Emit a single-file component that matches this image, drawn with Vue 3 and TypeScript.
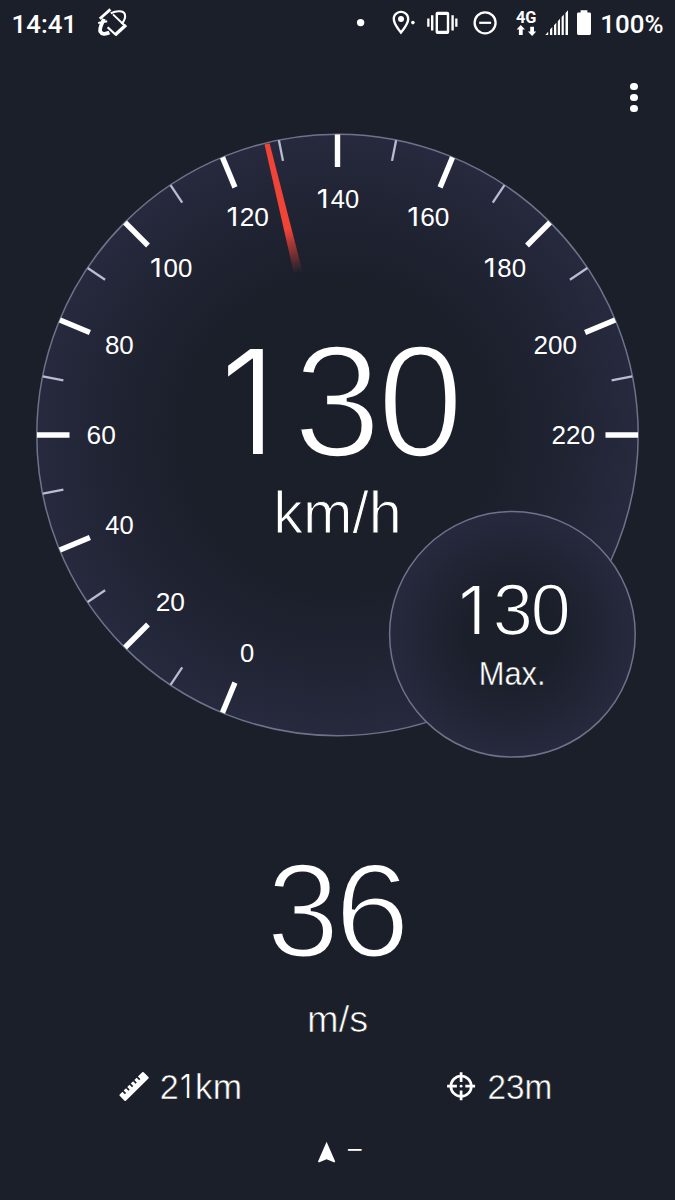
<script setup lang="ts">
interface Run {
  text: string
  left: number
  right: number
  baseline: number
  size: number
  family?: string
  weight?: number
  // Width of a background-coloured outline that slims the letters.
  thin?: number
}

type Label = Run[]

const SANS = 'Liberation Sans'
const ctx = document.createElement('canvas').getContext('2d')!

// Attributes of a run, stretched so that its ink spans left..right.
// Measured at a large size, where pixel rounding of the ink box is negligible.
function fit(r: Run) {
  const family = `"${r.family ?? SANS}", sans-serif`
  const thin = r.thin ?? 0
  ctx.font = `${r.weight ?? 400} 1000px ${family}`
  const m = ctx.measureText(r.text)
  const s = (r.right - r.left + thin) / (m.actualBoundingBoxLeft + m.actualBoundingBoxRight)
  return {
    x: (r.left - thin / 2 + m.actualBoundingBoxLeft * s).toFixed(2),
    y: r.baseline,
    textLength: (m.width * s).toFixed(2),
    lengthAdjust: 'spacingAndGlyphs',
    'font-family': family,
    'font-size': r.size,
    'font-weight': r.weight ?? 400,
    stroke: thin ? '#1b1f2a' : 'none',
    'stroke-width': thin,
  }
}

const clock: Label = [{ text: '14:41', left: 13.6, right: 72.4, baseline: 33, size: 26.3, weight: 500, family: 'Roboto' }]
const battery: Label = [{ text: '100%', left: 602.3, right: 662.7, baseline: 32.8, size: 26.3, weight: 500, family: 'Roboto' }]
const network: Label = [{ text: '4G', left: 516.2, right: 535.8, baseline: 22.8, size: 16.4, weight: 700, family: 'Roboto' }]

const CX = 337.5
const CY = 435
const point = (deg: number, r: number) => ({
  x: CX + r * Math.cos((deg * Math.PI) / 180),
  y: CY - r * Math.sin((deg * Math.PI) / 180),
})

const ticks = Array.from({ length: 23 }, (_, i) => {
  const deg = 247.5 - i * 11.25
  const major = i % 2 === 0
  return { major, a: point(deg, 300.5), b: point(deg, major ? 268 : 279.5) }
})

const scale: Label[] = Array.from({ length: 12 }, (_, i) => {
  const text = String(i * 20)
  const c = point(247.5 - i * 22.5, 236)
  const baseline = c.y + 9
  if (text[0] === '1') {
    const left = c.x + 0.9 - 20.2
    return [
      { text: '1', left, right: left + 8.2, baseline, size: 25.8, family: 'Inter' },
      { text: text.slice(1), left: left + 13, right: left + 40.3, baseline, size: 26.5 },
    ]
  }
  const width = [12.8, 27.4, 41.6][text.length - 1]
  return [{ text, left: c.x - width / 2, right: c.x + width / 2, baseline, size: 26.5 }]
})

const speed: Label[] = [
  [
    { text: '1', left: 227, right: 265, baseline: 454.4, size: 145, family: 'Inter', weight: 300 },
    { text: '3', left: 300, right: 373, baseline: 456.4, size: 160, thin: 3.6 },
    { text: '0', left: 384.2, right: 457.8, baseline: 456.4, size: 160, thin: 3.6 },
  ],
  [{ text: 'km/h', left: 277.5, right: 398, baseline: 533.2, size: 58.4, thin: 1.1 }],
]
const max: Label[] = [
  [
    { text: '1', left: 462, right: 480.3, baseline: 634.4, size: 66.4, family: 'Inter', weight: 300 },
    { text: '3', left: 495.9, right: 529.2, baseline: 635.3, size: 73, thin: 1.7 },
    { text: '0', left: 533.9, right: 568.1, baseline: 635.3, size: 73, thin: 1.7 },
  ],
  [{ text: 'Max.', left: 481.3, right: 542.6, baseline: 685.4, size: 33.4, thin: 0.4 }],
]
const metric: Label[] = [
  [
    { text: '3', left: 272.2, right: 332.6, baseline: 956.6, size: 133.8, thin: 3 },
    { text: '6', left: 342.7, right: 403, baseline: 956.6, size: 133.8, thin: 3 },
  ],
  [{ text: 'm/s', left: 309.8, right: 366.6, baseline: 1032.1, size: 37.8, thin: 0.7 }],
]
const distance: Label = [
  { text: '2', left: 161.5, right: 177, baseline: 1098.5, size: 34.6, thin: 0.5 },
  { text: '1', left: 181.5, right: 189.6, baseline: 1098.3, size: 32.6, family: 'Inter', weight: 300 },
  { text: 'km', left: 197.5, right: 239.9, baseline: 1098.5, size: 34.6, thin: 0.5 },
]
const accuracy: Label = [{ text: '23m', left: 489.2, right: 550.2, baseline: 1098.5, size: 34.6, thin: 0.5 }]
const heading: Label = [{ text: '–', left: 348, right: 361.5, baseline: 1159.4, size: 30, family: 'Inter', weight: 300 }]
</script>

<template>
  <main class="screen">
    <header class="status">
      <svg width="340" height="46" viewBox="0 0 340 46">
        <text><tspan v-for="(r, i) in clock" :key="i" v-bind="fit(r)">{{ r.text }}</tspan></text>
        <g class="line">
          <path d="M99.8 18.7 L110.4 9.4" stroke-width="2.8" />
          <path d="M110.8 13.2 C117 10.4 123.6 10.6 124.9 14.4 C125.6 17 124.2 20.8 121.6 24" stroke-width="2.1" />
          <path d="M113 14.4 L125.4 26.2" stroke-width="2" />
          <path d="M126 25 L115 35" stroke-width="3.4" />
          <path d="M116 35 L107.6 27.2" stroke-width="2.2" />
          <path d="M103.9 18.9 C102.3 23 98.9 28.4 100.4 31.6 C101.7 34.2 105.4 34.4 109.4 32.6" stroke-width="3.8" />
          <path d="M98.2 23 L107.2 21.2" stroke-width="2" />
        </g>
      </svg>
      <svg width="335" height="46" viewBox="340 0 335 46">
        <circle cx="360.6" cy="22.6" r="3.7" />
        <path
          fill-rule="evenodd"
          d="M401 10.8 C396.2 10.8 392.6 14.4 392.6 19 C392.6 25 401 34.4 401 34.4 C401 34.4 409.4 25 409.4 19 C409.4 14.4 405.8 10.8 401 10.8 Z M401 13.1 C404.4 13.1 407 15.7 407 19 C407 22.4 403.4 27.8 401 30.6 C398.6 27.8 395 22.4 395 19 C395 15.7 397.6 13.1 401 13.1 Z"
        />
        <circle cx="401" cy="19" r="3" />
        <circle cx="412.9" cy="22.6" r="1.8" />
        <path
          fill-rule="evenodd"
          d="M437.5 11.7 H447.3 Q449.2 11.7 449.2 13.6 V32.1 Q449.2 34 447.3 34 H437.5 Q435.6 34 435.6 32.1 V13.6 Q435.6 11.7 437.5 11.7 Z M438 15 V30.8 H446.8 V15 Z"
        />
        <path d="M431 15.2 h2.4 v15.2 h-2.4 z M427.2 18.6 h2.3 v8.2 h-2.3 z M451.4 15.2 h2.4 v15.2 h-2.4 z M455.2 18.6 h2.3 v8.2 h-2.3 z" />
        <circle class="line" cx="485.1" cy="22.8" r="10.5" stroke-width="2.3" />
        <path class="line" d="M479.2 22.8 H491.1" stroke-width="2.2" />
        <text><tspan v-for="(r, i) in network" :key="i" v-bind="fit(r)">{{ r.text }}</tspan></text>
        <path d="M520.8 25 L525 29.6 H522.7 V35 H518.9 V29.6 H516.6 Z M532.1 36 L536.3 31.4 H534 V26.8 H530.2 V31.4 H527.9 Z" />
        <path d="M545.3 35 L548.2 31.8 V35 Z M550 35 V29.6 L552.3 27.1 V35 Z M554 35 V25.3 L556.3 22.8 V35 Z M557.8 35 V21.2 L560 18.7 V35 Z M561.6 35 V17 L563.8 14.5 V35 Z M565.5 35 V13 L568 10.2 V35 Z" />
        <path d="M580.6 10.3 H587.4 V12.4 H589.6 Q591 12.4 591 13.8 V33.6 Q591 35 589.6 35 H578.4 Q577 35 577 33.6 V13.8 Q577 12.4 578.4 12.4 H580.6 Z" />
        <text><tspan v-for="(r, i) in battery" :key="i" v-bind="fit(r)">{{ r.text }}</tspan></text>
      </svg>
    </header>

    <nav class="toolbar">
      <button class="menu" aria-label="Menu"><i></i><i></i><i></i></button>
    </nav>

    <svg class="dial" width="675" height="660" viewBox="0 120 675 660">
      <defs>
        <radialGradient id="face">
          <stop offset="0.5" stop-color="#1b1f2a" />
          <stop offset="0.75" stop-color="#202332" />
          <stop offset="1" stop-color="#272a3e" />
        </radialGradient>
        <radialGradient id="face-small">
          <stop offset="0.35" stop-color="#1b1f2a" />
          <stop offset="0.7" stop-color="#212434" />
          <stop offset="1" stop-color="#272a3e" />
        </radialGradient>
        <linearGradient id="needle" x1="0" y1="-300" x2="0" y2="-167" gradientUnits="userSpaceOnUse">
          <stop offset="0.66" stop-color="#f04438" />
          <stop offset="1" stop-color="#f04438" stop-opacity="0" />
        </linearGradient>
      </defs>
      <circle class="rim" :cx="CX" :cy="CY" r="300.7" fill="url(#face)" />
      <line
        v-for="(t, i) in ticks"
        :key="i"
        :class="t.major ? 'major' : 'minor'"
        :x1="t.a.x"
        :y1="t.a.y"
        :x2="t.b.x"
        :y2="t.b.y"
      />
      <text v-for="(l, n) in scale" :key="n"><tspan v-for="(r, i) in l" :key="i" v-bind="fit(r)">{{ r.text }}</tspan></text>
      <path
        :transform="`translate(${CX} ${CY}) rotate(-13.6)`"
        d="M-2.6 -299.5 H2.6 L4.4 -167 H-4.4 Z"
        fill="url(#needle)"
      />
      <text v-for="(l, n) in speed" :key="n"><tspan v-for="(r, i) in l" :key="i" v-bind="fit(r)">{{ r.text }}</tspan></text>
      <circle class="rim" cx="512.4" cy="634.3" r="122.8" fill="url(#face-small)" />
      <text v-for="(l, n) in max" :key="n"><tspan v-for="(r, i) in l" :key="i" v-bind="fit(r)">{{ r.text }}</tspan></text>
    </svg>

    <svg class="metric" width="675" height="280" viewBox="0 780 675 280">
      <text v-for="(l, n) in metric" :key="n"><tspan v-for="(r, i) in l" :key="i" v-bind="fit(r)">{{ r.text }}</tspan></text>
    </svg>

    <section class="stats">
      <svg width="337" height="60" viewBox="0 1060 337 60">
        <path
          transform="translate(134 1086.4) rotate(-44.5)"
          d="M-15.8 -4.3 H-12 V-0.8 H-10.3 V-4.3 H-7 V-0.8 H-5.3 V-4.3 H-2 V-0.8 H-0.3 V-4.3 H3 V-0.8 H4.7 V-4.3 H8 V-0.8 H9.7 V-4.3 H15.8 Q16.8 -4.3 16.8 -3.3 V3.5 Q16.8 4.5 15.8 4.5 H-15.8 Q-16.8 4.5 -16.8 3.5 V-3.3 Q-16.8 -4.3 -15.8 -4.3 Z"
        />
        <text><tspan v-for="(r, i) in distance" :key="i" v-bind="fit(r)">{{ r.text }}</tspan></text>
      </svg>
      <svg width="338" height="60" viewBox="337 1060 338 60">
        <circle class="line" cx="461.1" cy="1086.2" r="10.2" stroke-width="2.7" />
        <path
          class="line"
          d="M461.1 1072.2 V1082 M461.1 1090.4 V1100.2 M447.1 1086.2 H456.9 M465.3 1086.2 H475.1"
          stroke-width="2.7"
        />
        <circle cx="461.1" cy="1086.2" r="1.4" />
        <text><tspan v-for="(r, i) in accuracy" :key="i" v-bind="fit(r)">{{ r.text }}</tspan></text>
      </svg>
    </section>

    <footer>
      <svg width="675" height="80" viewBox="0 1120 675 80">
        <path d="M326.6 1141.8 L335.2 1161.6 L334.4 1162.4 L326.6 1159.2 L318.8 1162.4 L318 1161.6 Z" />
        <text><tspan v-for="(r, i) in heading" :key="i" v-bind="fit(r)">{{ r.text }}</tspan></text>
      </svg>
    </footer>
  </main>
</template>

<style>
body {
  margin: 0;
  background: #1b1f2a;
}
</style>

<style scoped>
.screen {
  display: flex;
  flex-direction: column;
  width: 675px;
  height: 1200px;
  overflow: hidden;
  background: #1b1f2a;
  font-family: 'Liberation Sans', sans-serif;
}
svg {
  display: block;
  flex: none;
  fill: #fff;
}
.status,
.stats {
  display: flex;
}
.line {
  fill: none;
  stroke: #fff;
}
.toolbar {
  display: flex;
  justify-content: flex-end;
  align-items: flex-end;
  box-sizing: border-box;
  height: 74px;
  padding: 0 33.5px 7.5px 0;
}
.menu {
  display: flex;
  flex-direction: column;
  justify-content: center;
  gap: 3.3px;
  padding: 0;
  margin: 0 4px 0 0;
  height: 30px;
  border: 0;
  background: none;
}
.menu i {
  width: 8px;
  height: 8px;
  border-radius: 50%;
  background: #fff;
}
.rim {
  stroke: #6e738a;
  stroke-width: 1.5;
}
.major {
  stroke: #fff;
  stroke-width: 5.4;
}
.minor {
  stroke: #b9bcd4;
  stroke-width: 2.3;
}
</style>
